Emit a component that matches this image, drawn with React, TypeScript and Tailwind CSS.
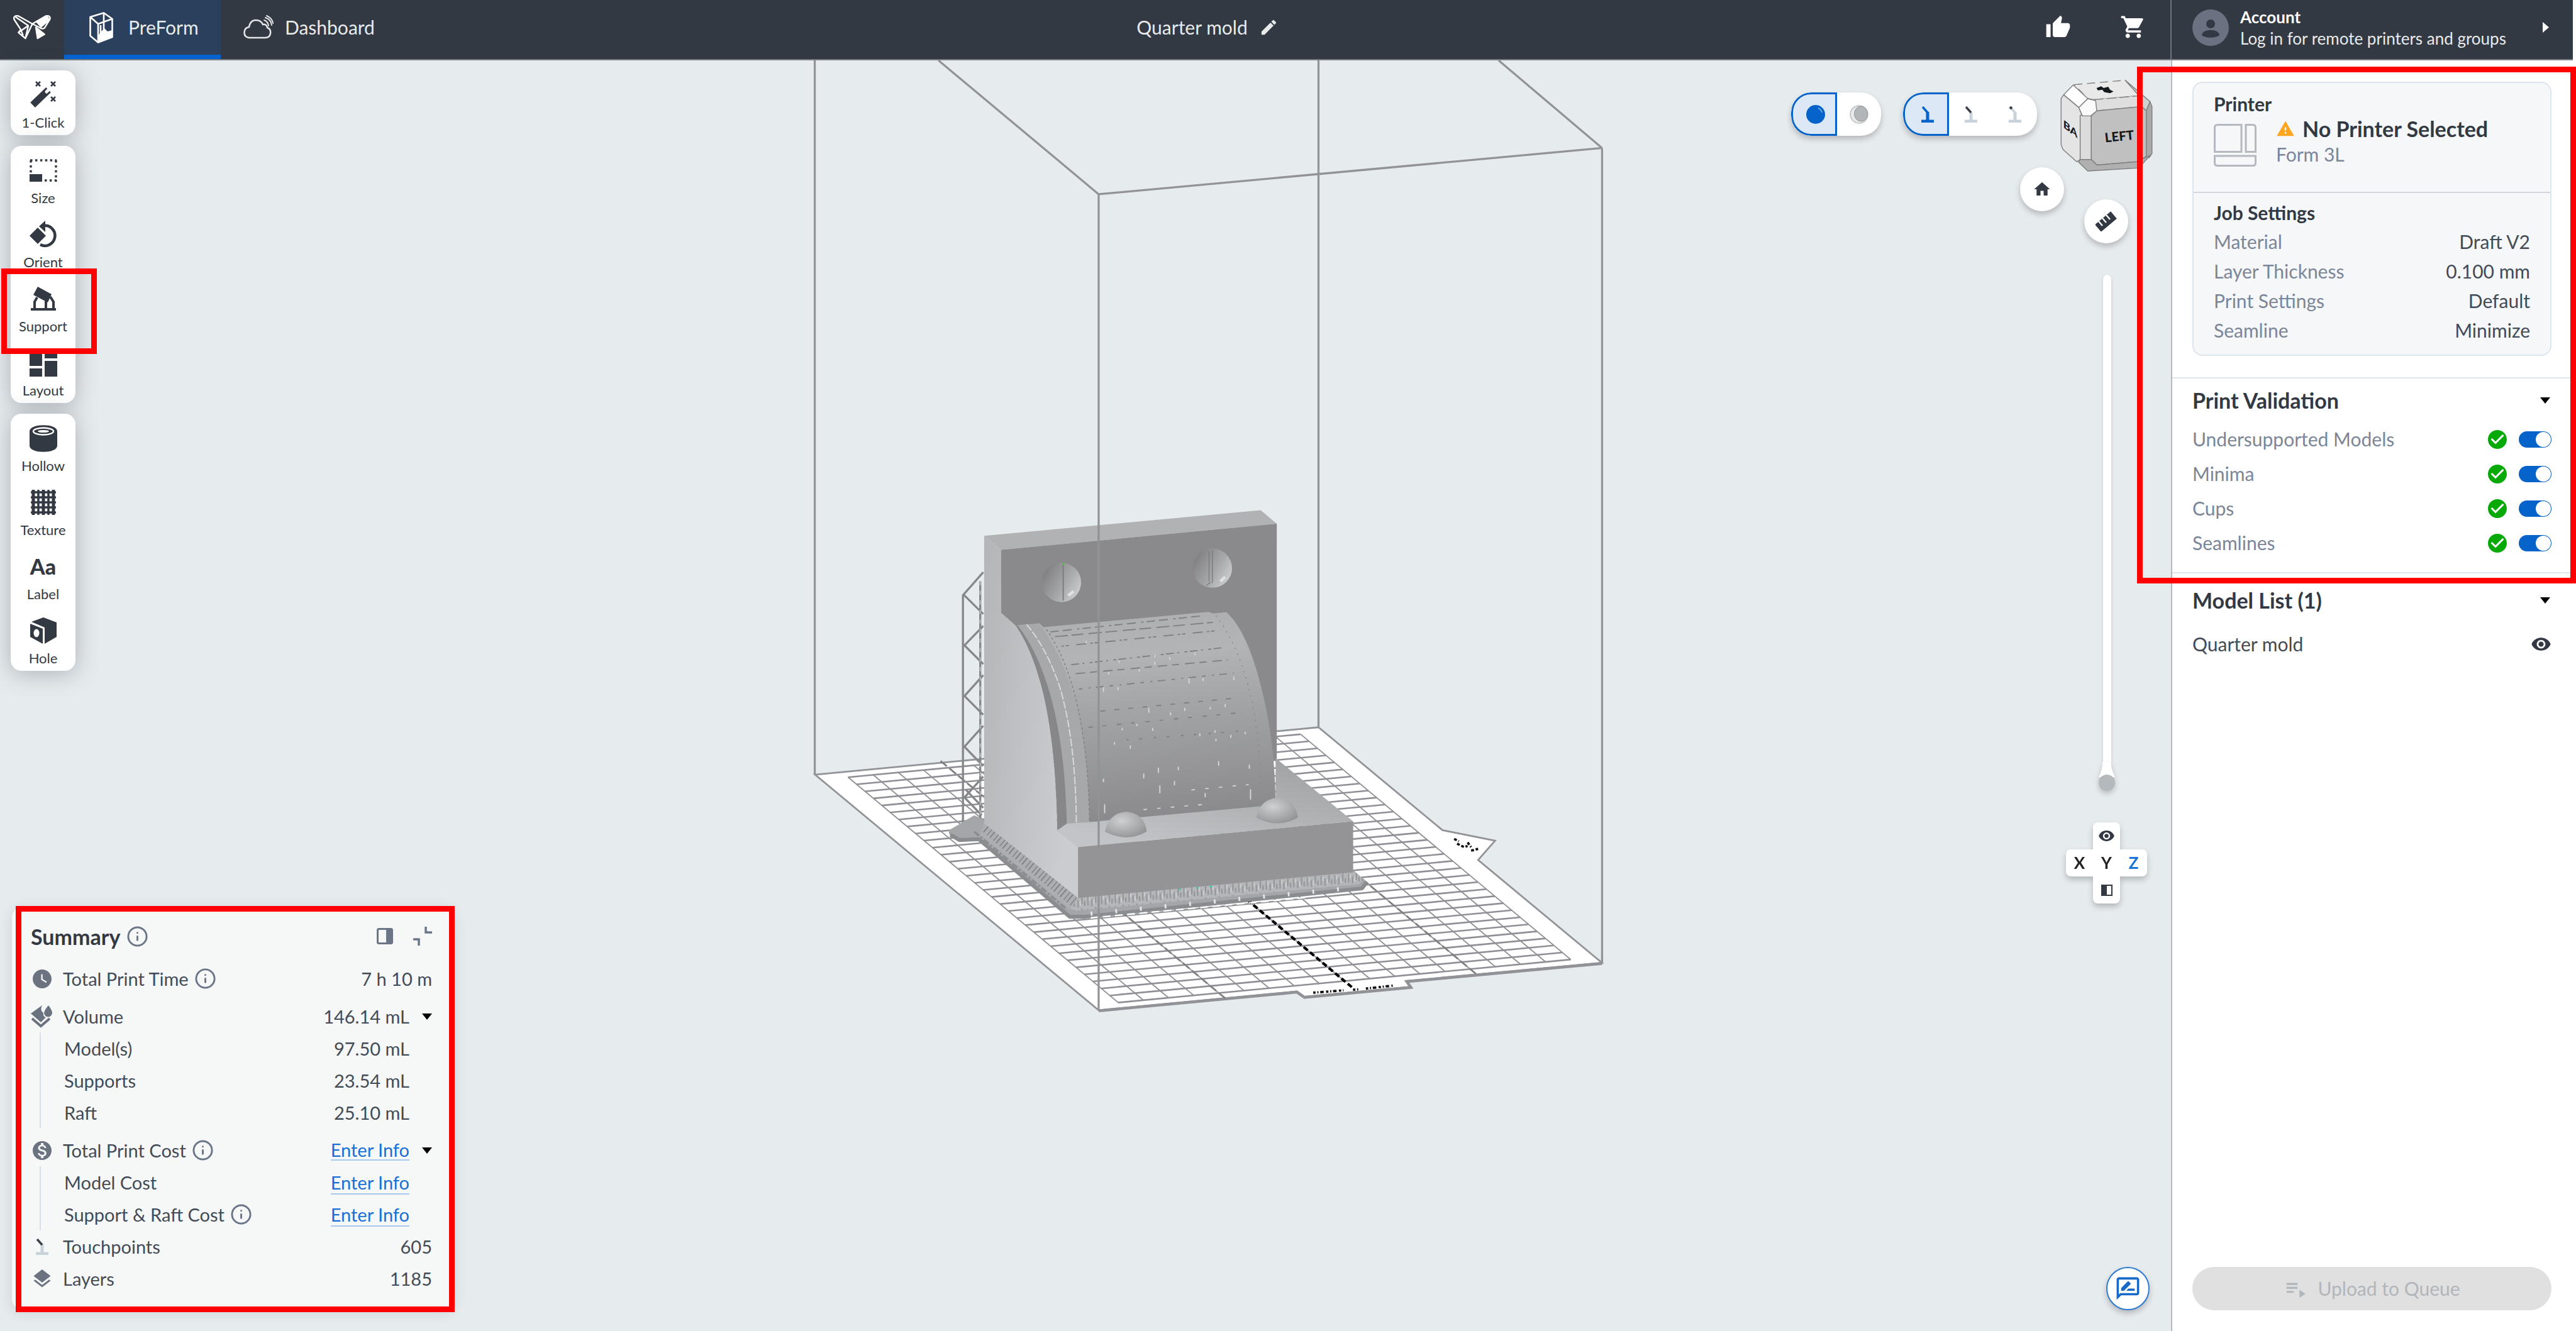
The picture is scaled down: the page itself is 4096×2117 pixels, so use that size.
import { ReactElement, ReactNode } from 'react'
import { Info } from 'lucide-react'
import {
  MdCheckCircle,
  MdEdit,
  MdHome,
  MdLayers,
  MdMonetizationOn,
  MdOutlineRateReview,
  MdPlaylistPlay,
  MdShoppingCart,
  MdThumbUp,
  MdVisibility,
  MdWarning,
  MdWatchLater,
} from 'react-icons/md'

const settings = [
  ['Material', 'Draft V2'],
  ['Layer Thickness', '0.100 mm'],
  ['Print Settings', 'Default'],
  ['Seamline', 'Minimize'],
]

const validations = ['Undersupported Models', 'Minima', 'Cups', 'Seamlines']

function Caret({ className = '' }: { className?: string }): ReactElement {
  return (
    <svg viewBox="0 0 16 10" className={`h-[10px] w-4 ${className}`} fill="#000">
      <path d="M0 0h16l-8 10z" />
    </svg>
  )
}

function Logo(): ReactElement {
  return (
    <svg viewBox="0 0 65 42" className="h-[39px] w-[60px]" fill="none" stroke="#fff" strokeWidth="2.6" strokeLinejoin="round">
      <path d="M33 15 10 2Q6 0 3 2Q0 4 2 8L13 25 9 30 21 40z" />
      <path d="M4 3 26 18M9 30 26 18 21 40M13 25l4 10" />
      <path d="M33 15 55 2Q59 0 62 2Q65 5 62 9L54 22Q50 25 45 21z" />
      <path d="M40 11 58 2 62 8 48 20z" fill="#fff" />
      <path d="M39 21 54 33 42 40z" fill="#fff" />
    </svg>
  )
}

function PreFormIcon(): ReactElement {
  return (
    <svg viewBox="0 0 38 50" className="h-[50px] w-[38px]" fill="none" stroke="#fff" strokeWidth="2.6" strokeLinejoin="round">
      <path d="M1.500 8 23 1.500 36.500 11v29L14 48.500 1.500 38z" />
      <path d="M1.500 8 14 19 36.500 11M14 19v29M23 2v27M18 21v20" />
      <path d="M18 32 24 26 29 31 36 29V40L14 48V38z" fill="#fff" stroke="none" />
    </svg>
  )
}

function CloudIcon(): ReactElement {
  return (
    <svg viewBox="0 0 48 38" className="h-[38px] w-12" fill="none" stroke="#e4e6e8" strokeWidth="2.500" strokeLinecap="round">
      <path d="M9 36Q1 35 1.500 27 2 20 9 19 11 8 20 8 28 8 31 15 37 14 38 20 44 22 43 29 42 36 35 36z" />
      <path d="M33 8q6 2 7 9M35 4q9 3 10 12M37 1q9 4 10 12" strokeWidth="2" />
    </svg>
  )
}

function Header(): ReactElement {
  return (
    <header className="flex h-[96px] shrink-0 mr-[5px] bg-[#323943] border-b-2 border-[#7b8087] text-[30px] text-[#e8eaec]">
      <a href="#home" aria-label="Home" className="flex w-[102px] items-center justify-center pb-2">
        <Logo />
      </a>
      <button className="flex w-[249px] items-center gap-6 border-b-[7px] border-[#0563d0] bg-[#2b405c] pl-10">
        <PreFormIcon />
        PreForm
      </button>
      <button className="flex w-[254px] items-center gap-[18px] pl-9 pb-2">
        <CloudIcon />
        Dashboard
      </button>
      <div className="flex flex-1 items-center justify-center gap-[18px] pb-2">
        Quarter mold
        <button aria-label="Rename">
          <MdEdit size={31} />
        </button>
      </div>
      <div className="flex w-[216px] items-center gap-[78px] pl-[17px] pb-2 text-white">
        <button aria-label="Feedback">
          <MdThumbUp size={41} />
        </button>
        <button aria-label="Store">
          <MdShoppingCart size={42} />
        </button>
      </div>
      <button className="flex w-[640px] items-center gap-[18px] border-l-2 border-[#6d737b] pl-[33px] pr-[38px] pb-[7px] text-left">
        <svg viewBox="0 0 58 58" className="h-[58px] w-[58px]">
          <circle cx="29" cy="29" r="29" fill="#6a7281" />
          <circle cx="29" cy="23" r="7" fill="#323943" />
          <path d="M15 41c0-11 28-11 28 0-6 5-22 5-28 0z" fill="#323943" />
        </svg>
        <span className="flex-1 text-[26px] leading-[34px]">
          <b className="block text-white">Account</b>
          Log in for remote printers and groups
        </span>
        <svg viewBox="0 0 10 17" className="h-[17px] w-[10px]" fill="#fff">
          <path d="M0 0v17l10-8.500z" />
        </svg>
      </button>
    </header>
  )
}

const ink = '#323943'

function WandIcon(): ReactElement {
  return (
    <svg viewBox="0 0 44 44" className="h-11 w-11" fill="none" stroke={ink}>
      <path d="M5 38 30 14" strokeWidth="11" />
      <path d="M27 17l4-4" stroke="#fff" strokeWidth="5" strokeLinecap="round" />
      <path d="M10 1l7 7m0-7-7 7M34 1l7 7m0-7-7 7M34 25l7 7m0-7-7 7" strokeWidth="2.6" />
    </svg>
  )
}

function SizeIcon(): ReactElement {
  return (
    <svg viewBox="0 0 44 36" className="h-9 w-11" fill="none" stroke={ink} strokeWidth="3.400">
      <path d="M1 2h42M24 34h19" strokeDasharray="3.500 4.400" />
      <path d="M2 2v23M42 2v34" strokeDasharray="3.500 4.400" />
      <path d="M0 24h20v12H0z" fill={ink} stroke="none" />
    </svg>
  )
}

function OrientIcon(): ReactElement {
  return (
    <svg viewBox="0 0 44 44" className="h-11 w-11" fill={ink}>
      <path d="M0 24 13 11 26 24 13 37z" />
      <path d="M22 8a16 16 0 1 1-5 30" fill="none" stroke={ink} strokeWidth="4.500" />
      <path d="M15 9 25 0v18z" />
    </svg>
  )
}

function SupportIcon(): ReactElement {
  return (
    <svg viewBox="0 0 40 38" className="h-[38px] w-10" fill="none" stroke={ink} strokeWidth="4">
      <path d="M11 0 33 12 27 25 4 13z" fill={ink} stroke="none" />
      <path d="M0 36h40M6 36V24l4-7M24 36V20M36 36V24l-5-8" />
    </svg>
  )
}

function LayoutIcon(): ReactElement {
  return (
    <svg viewBox="0 0 44 44" className="h-11 w-11" fill={ink}>
      <path d="M0 0h20v27H0zM0 31h20v13H0zM24 0h20v15H24zM24 19h20v25H24z" />
    </svg>
  )
}

function HollowIcon(): ReactElement {
  return (
    <svg viewBox="0 0 44 44" className="h-11 w-11" fill={ink}>
      <path d="M0 11C0-2 44-2 44 11V34C44 47 0 47 0 34z" />
      <ellipse cx="22" cy="11" rx="16" ry="5.500" fill="none" stroke="#fff" strokeWidth="2.400" />
      <ellipse cx="22" cy="11" rx="9" ry="2" fill="#fff" />
    </svg>
  )
}

function TextureIcon(): ReactElement {
  const steps = [4, 12, 20, 28, 36]
  return (
    <svg viewBox="0 0 40 40" className="h-10 w-10" fill="none" stroke={ink} strokeWidth="3.600" strokeLinecap="round">
      {steps.map((p, i) => (
        <g key={p}>
          <path d={`M1.500 ${p}h37`} strokeDasharray={i % 2 ? '6 1' : '8 1'} />
          <path d={`M${p} 1.500v37`} strokeWidth={i % 2 ? 3.6 : 5} />
        </g>
      ))}
    </svg>
  )
}

function HoleIcon(): ReactElement {
  return (
    <svg viewBox="0 0 42 42" className="h-[42px] w-[42px]" fill={ink}>
      <path d="M2 7 21 0 42 8V31L23 42V16z" />
      <path d="M0 10 20 18V42L0 31z" />
      <ellipse cx="10" cy="25" rx="4.500" ry="6.500" fill="#fff" />
    </svg>
  )
}

function Tool({ icon, label }: { icon: ReactNode; label: string }): ReactElement {
  return (
    <button className="flex h-[102px] w-full flex-col items-center pt-[17px] text-[#323943]">
      <span className="flex h-11 items-center justify-center">{icon}</span>
      <span className="mt-2 text-[22px] leading-[28px]">{label}</span>
    </button>
  )
}

function ToolCard({ children }: { children: ReactNode }): ReactElement {
  return (
    <div className="w-[103px] rounded-[17px] bg-white pb-px shadow-[0_4px_36px_rgba(60,70,80,0.35)]">{children}</div>
  )
}

function Toolbar(): ReactElement {
  return (
    <nav className="absolute left-[17px] top-4 flex flex-col gap-[17px]">
      <ToolCard>
        <Tool icon={<WandIcon />} label="1-Click" />
      </ToolCard>
      <ToolCard>
        <Tool icon={<SizeIcon />} label="Size" />
        <Tool icon={<OrientIcon />} label="Orient" />
        <Tool icon={<SupportIcon />} label="Support" />
        <Tool icon={<LayoutIcon />} label="Layout" />
      </ToolCard>
      <ToolCard>
        <Tool icon={<HollowIcon />} label="Hollow" />
        <Tool icon={<TextureIcon />} label="Texture" />
        <Tool icon={<b className="text-[34px] font-black leading-[34px]">Aa</b>} label="Label" />
        <Tool icon={<HoleIcon />} label="Hole" />
      </ToolCard>
    </nav>
  )
}

// points along a line of the build plate, u across the front edge, v from back to front
function plate(u: number, v: number): string {
  const x = 1450.5 + 774 * u + 462 * v
  const y = 1328.5 - 73.6 * u + 385.4 * v
  return `${x.toFixed(1)} ${y.toFixed(1)}`
}

// engraved marks of the curved face: [y at left, y drop to right, dash pattern, start x, end x]
const marks: [number, number, string, number, number][] = [
  [470, -55, '28 14 30 18 8 10', 385, 905],
  [486, -48, '44 12 40 18', 400, 930],
  [518, -52, '8 6 12 24 34 14', 422, 940],
  [580, -58, '26 12 6 18 10 8', 455, 970],
  [610, -46, '32 16 24 20', 470, 980],
  [662, -54, '12 22 6 18 26 20', 480, 1000],
  [736, -44, '18 30 16 30', 552, 1005],
  [790, -48, '16 32 12 36', 512, 1010],
  [832, -30, '8 34 10 40', 640, 1030],
]

const ticks = [
  [615, 566, 8], [505, 500, 8], [735, 545, 10], [785, 555, 10], [870, 540, 8], [580, 605, 8], [683, 595, 8],
  [735, 570, 10], [612, 655, 10], [563, 655, 16], [850, 625, 18], [897, 625, 10], [1000, 620, 12], [715, 725, 16],
  [788, 740, 10], [836, 725, 10], [921, 722, 8], [971, 712, 10], [675, 778, 8], [728, 792, 10], [626, 792, 8],
  [886, 810, 10], [937, 800, 8], [990, 815, 10], [600, 840, 8], [653, 850, 12], [940, 828, 8], [1038, 805, 8],
  [747, 925, 18], [698, 945, 16], [814, 922, 12], [949, 903, 16], [1052, 915, 14], [563, 962, 12], [801, 970, 14],
  [752, 985, 26], [904, 1010, 14], [1056, 998, 34], [567, 1048, 30],
]

function Viewport(): ReactElement {
  const cols = Array.from({ length: 19 }, (_, i) => i)
  const rows = Array.from({ length: 33 }, (_, i) => i)
  return (
    <svg viewBox="0 102 3713 2175" className="h-full w-full" preserveAspectRatio="xMidYMin slice" fill="none">
      <defs>
        <linearGradient id="side" x1="0" x2="1" y1="0" y2="0.300">
          <stop offset="0" stopColor="#b4b5b7" />
          <stop offset="1" stopColor="#cbccd0" />
        </linearGradient>
        <linearGradient id="barrel" x1="0.400" x2="0.500" y1="0" y2="1">
          <stop offset="0" stopColor="#aeafb1" />
          <stop offset="0.200" stopColor="#b3b4b6" />
          <stop offset="0.450" stopColor="#a4a5a7" />
          <stop offset="1" stopColor="#89898b" />
        </linearGradient>
        <linearGradient id="ledge" x1="1" x2="0.300" y1="0" y2="1">
          <stop offset="0" stopColor="#9d9ea0" />
          <stop offset="1" stopColor="#c3c4c7" />
        </linearGradient>
        <linearGradient id="dent" x1="0" x2="1" y1="0.200" y2="0.800">
          <stop offset="0" stopColor="#7c7c7e" />
          <stop offset="0.600" stopColor="#a9aaac" />
          <stop offset="1" stopColor="#d0d1d3" />
        </linearGradient>
        <radialGradient id="dome" cx="0.400" cy="0.350" r="0.700">
          <stop offset="0" stopColor="#cfd0d2" />
          <stop offset="1" stopColor="#939496" />
        </radialGradient>
        <pattern id="pins" width="46" height="40" patternUnits="userSpaceOnUse" patternTransform="skewY(-5)">
          <path d="M5 2v30M18 12v24M31 0v26M40 16v16" stroke="#8f9092" strokeWidth="4" />
          <path d="M10 4v14M25 14v16" stroke="#cfd0d3" strokeWidth="4" />
        </pattern>
      </defs>

      {/* build plate */}
      <path
        d="M1394 1324 2255 1243 2467 1419 2557 1437 2528 1470 2740 1646 2406 1677 2413 1687 2231 1704 2218 1695 1879 1727z"
        fill="#fff"
        stroke="#929398"
        strokeWidth="3"
      />
      <path d="M1879 1728 2218 1696 2231 1705 2413 1688 2406 1678 2740 1647" stroke="#919297" strokeWidth="5" />
      <g stroke="#8f9095" strokeWidth="2">
        {cols.map((i) => (
          <path key={i} d={`M${plate(i / 18, 0)}L${plate(i / 18, 1)}`} />
        ))}
      </g>
      <g stroke="#8f9095" strokeWidth="2.800">
        {rows.map((i) => (
          <path key={i} d={`M${plate(0, i / 32)}L${plate(1, i / 32)}`} />
        ))}
      </g>
      <path
        d={`M${plate(4 / 18, -0.03)}L${plate(4 / 18, 1.03)}M${plate(14 / 18, 0)}L${plate(14 / 18, 1.03)}`}
        stroke="#7f7f80"
        strokeWidth="3"
        strokeDasharray="14 6"
      />
      <path d={`M${plate(0.5, 0.5)}L${plate(0.5, 1.03)}`} stroke="#000" strokeWidth="4.500" strokeDasharray="9 5" />
      <path d="M2246 1697 2298 1693M2314 1692 2326 1691M2336 1690 2382 1685" stroke="#111" strokeWidth="4" strokeDasharray="4 3 2 3 6 4" />
      <path d="M2487 1434l8 4M2492 1442l12 6 6-2M2510 1440l6 8M2516 1454l12-3" stroke="#111" strokeWidth="4" strokeDasharray="5 3" />

      {/* build volume behind the part */}
      <path d="M1393.500 102V1324M2255 102V1243M2740 252V1646M1879 331 2740 252M1879 331 1605 102M2740 252 2563 102" stroke="#919397" strokeWidth="3.500" />

      {/* the part itself */}
      <g transform="translate(1600 840) scale(0.5102)">
        <g stroke="#86878a" strokeWidth="7">
          <path d="M92 345V1135M150 300V1110" />
          <path d="M160 270 94 345 160 410M160 450 97 515 160 578M160 615 97 685 160 748M160 785 97 855 160 920M160 955 97 1025 155 1085" />
          <path d="M102 1000 160 1060" />
        </g>
        <path d="M150 300V1110" stroke="#b9babc" strokeWidth="4" strokeDasharray="14 18" />
        <path d="M163 1100 130 1085 45 1135Q40 1155 75 1168L145 1165 450 1425 500 1425 1430 1330 1446 1308 1400 1270z" fill="#a5a6a9" />
        <path d="M50 1150 80 1168 145 1165 450 1425 500 1425 1430 1330 1446 1308" stroke="#8b8c8f" strokeWidth="13" strokeLinejoin="round" />
        <path d="M478 1355 1400 1272 1436 1300 1420 1316 470 1405 440 1395z" fill="#b5b6b9" />
        <path d="M478 1355 1400 1272 1436 1300 1420 1316 470 1405 440 1395z" fill="url(#pins)" />
        <path d="M163 1110 478 1365 450 1400 150 1150z" fill="#adaeb1" />
        <path d="M170 1128 470 1380" stroke="#808184" strokeWidth="34" strokeDasharray="4 12 3 9" />
        <path d="M130 1140 440 1400" stroke="#8c8d90" strokeWidth="8" strokeDasharray="20 8 6 8" />
        <path d="M520 1415 1400 1328" stroke="#e4e6e8" strokeWidth="14" strokeDasharray="6 77" />
        <path d="M520 1429 1250 1360" stroke="#fff" strokeWidth="5" strokeDasharray="26 15" />

        <path d="M163 148 1090 62 1144 107 219 195z" fill="#b1b2b4" />
        <path d="M219 195 1144 107V900H500L219 405z" fill="#8a8a8c" />
        <path d="M163 148 219 195V405L270 450Q400 640 408 1135L478 1192V1362L163 1112z" fill="url(#side)" />
        <path d="M1140 893 1400 1105 478 1192 408 1135 440 1112 516 1108 1140 1045z" fill="url(#ledge)" />
        <path d="M478 1192 1400 1105V1276L478 1362z" fill="#949496" />

        <path d="M270 450 290 446Q430 650 442 1112L408 1135Q400 640 270 450z" fill="#878789" />
        <path d="M275 447 350 441Q510 640 518 1108L440 1113Q430 650 275 447z" fill="#a7a8aa" />
        <path d="M345 441 362 454 915 403 930 408 975 404Q1050 470 1100 690 1138 850 1140 1050L700 1090 516 1108Q510 650 345 441z" fill="url(#barrel)" />
        <path d="M305 445Q370 520 415 650 470 830 472 1112" stroke="#d9dadd" strokeWidth="4" strokeDasharray="26 6" />
        <path d="M372 462Q510 660 516 1108" stroke="#808183" strokeWidth="3" strokeDasharray="8 8" />
        <path d="M940 415Q1080 600 1090 980" stroke="#88898b" strokeWidth="3" strokeDasharray="5 16" />
        {marks.map(([y, drop, dash, from, to]) => (
          <path key={y} d={`M${from} ${y}L${to} ${y + drop}`} stroke="#7f8082" strokeWidth="4" strokeDasharray={dash} />
        ))}
        {ticks.map(([x, y, h]) => (
          <path key={`${x}-${y}`} d={`M${x} ${y}v${h}`} stroke="#d5d6d9" strokeWidth="4" />
        ))}
        <path d="M697 1066 905 1048M858 1000 1050 982" stroke="#cfd0d2" strokeWidth="4" strokeDasharray="12 34" />

        <circle cx="422" cy="304" r="66" fill="url(#dent)" />
        <circle cx="928" cy="256" r="66" fill="url(#dent)" />
        <path d="M428 242V365" stroke="#7b7c7e" strokeWidth="4" />
        <path d="M426 242h6" stroke="#3fd12f" strokeWidth="5" />
        <path d="M917 200V300M928 196V306M908 315l14-12" stroke="#7b7c7e" strokeWidth="3" />
        <path d="M445 348l18-14M955 300l16-14" stroke="#e0e1e3" strokeWidth="10" />
        <path d="M568 1140Q580 1078 640 1073 700 1078 708 1140 640 1178 568 1140z" fill="url(#dome)" />
        <path d="M1075 1093Q1087 1031 1147 1026 1207 1031 1215 1093 1147 1131 1075 1093z" fill="url(#dome)" />
        <path d="M816 1333h6M875 1328h6M920 1324h6" stroke="#2fc7a0" strokeWidth="5" />
      </g>

      <path d="M1879 331V1727" stroke="#919397" strokeWidth="3.500" />
    </svg>
  )
}

function ViewCube(): ReactElement {
  return (
    <svg viewBox="0 0 158 158" className="absolute right-[29px] top-[30px] h-[147px] w-[147px]" stroke="#7f7f7f" strokeWidth="1.500" strokeLinejoin="round">
      <path d="M23.600 9.300 111 1.700 134.500 28.300 57.600 35 47 33z" fill="#e9e9e9" strokeDasharray="14 8" />
      <path d="M22 10 47 33 31.600 48.300 5.700 26.700z" fill="#fff" />
      <path d="M57.600 35 134.500 28.300 139 46.700 62.300 54z" fill="#dedede" strokeDasharray="16 6" />
      <path d="M111 1.700 153.400 38.300 147 54 139 46.700 134.500 28.300z" fill="#cfcfcf" />
      <path d="M1.400 33 5.700 26.700 31.600 48.300 37 61.700 34 63V137L28 141 4.700 120 1.400 112z" fill="#e4e4e4" />
      <path d="M34 61.700H53V137.300H34z" fill="#dcdcdc" />
      <path d="M62.300 54 139 46.700 147 54V132L130.700 141 62.800 146.700 53 137.300V62.700z" fill="#c0c0c0" />
      <path d="M153.400 38.300 156.700 46.700V127L152 134 147 132V54z" fill="#a9a9a9" />
      <path d="M62.800 146.700 130.700 141 154 130 137 148.300 130.700 152 47 157 31 141.700 34 137.300H53z" fill="#b0b0b0" />
      <path d="M47 33.300 60.400 36.700 62.300 54 52 62.700H37.800L31.600 48.300z" fill="#fafafa" />
      <path d="M62 15l8-3 4 3 8-2 3 5 6 3-6 3-10-2-3-4-8 1z" fill="#15181d" stroke="none" />
      <text x="77" y="108" transform="rotate(-6 77 108)" fontSize="22" fontWeight="900" fill="#15181d" stroke="none">
        LEFT
      </text>
      <text x="5" y="82" transform="translate(5 82) skewY(38) translate(-5 -82)" fontSize="18" fontWeight="900" fill="#15181d" stroke="none">
        BA
      </text>
    </svg>
  )
}

function Arm({ tip, base }: { tip: string; base: string }): ReactElement {
  return (
    <svg viewBox="0 0 20 26" className="h-[26px] w-5" fill="none" strokeWidth="4.500">
      <path d="M10 24V9M0 24h20" stroke={base} strokeWidth="5" />
      <path d="M10 10 2 1" stroke={tip} strokeWidth="3.500" />
    </svg>
  )
}

const segment = 'flex h-[69px] w-[70px] items-center justify-center'
const segmentActive =
  'flex h-[69px] w-[73px] items-center justify-center rounded-l-[32px] border-3 border-[#0563c9] bg-[#dde8f6] pl-1'

function ViewControls(): ReactElement {
  return (
    <>
      <div className="absolute right-[461px] top-[51px] flex overflow-hidden rounded-[32px] bg-white shadow-[0_5px_10px_rgba(0,0,0,0.22)]">
        <button className={segmentActive} aria-label="Solid view" aria-pressed>
          <svg viewBox="0 0 30 30" className="h-[30px] w-[30px]">
            <circle cx="15" cy="15" r="15" fill="#0563c9" />
            <path d="M19 5q5 2 6 7" fill="none" stroke="#8ab6e8" strokeWidth="1.500" />
          </svg>
        </button>
        <button className={segment} aria-label="Slice view">
          <svg viewBox="0 0 30 30" className="h-[30px] w-[30px]">
            <circle cx="15" cy="15" r="14" fill="#e6e8e9" stroke="#a2a6a9" strokeWidth="1.500" strokeDasharray="2 1" />
            <ellipse cx="18" cy="14" rx="10.500" ry="12" fill="#b2b6b8" stroke="#94999c" />
          </svg>
        </button>
      </div>
      <div className="absolute right-[213px] top-[51px] flex overflow-hidden rounded-[32px] bg-white shadow-[0_5px_10px_rgba(0,0,0,0.22)]">
        <button className={segmentActive} aria-label="All supports" aria-pressed>
          <Arm tip="#0563c9" base="#0563c9" />
        </button>
        <button className={segment} aria-label="Touchpoints and tips">
          <Arm tip="#3a3f46" base="#c8d2da" />
        </button>
        <button className={segment} aria-label="Touchpoints only">
          <svg viewBox="0 0 20 26" className="h-[26px] w-5" fill="none" stroke="#c8d2da">
            <path d="M10 24V9M0 24h20" strokeWidth="5" />
            <path d="M10 10 2 1" strokeWidth="3.500" />
            <path d="M5 4 2 1" stroke="#3a3f46" strokeWidth="4" />
          </svg>
        </button>
      </div>
      <ViewCube />
      <button aria-label="Home view" className="absolute right-[170px] top-[170px] flex h-[70px] w-[70px] items-center justify-center rounded-full bg-white text-[#323943] shadow-[0_5px_10px_rgba(0,0,0,0.22)]">
        <MdHome size={30} />
      </button>
      <button aria-label="Measure" className="absolute right-[68px] top-[221px] flex h-[70px] w-[70px] items-center justify-center rounded-full bg-white shadow-[0_5px_10px_rgba(0,0,0,0.22)]">
        <svg viewBox="0 0 34 32" className="h-8 w-[34px]" fill="none">
          <path d="M4 27 29 6" stroke="#323943" strokeWidth="15" />
          <path d="M5 16l6 7M11 11l6 7M17 6l6 7" stroke="#fff" strokeWidth="2.400" />
        </svg>
      </button>
      <label className="absolute right-[89px] top-[341px] flex h-[821px] w-[26px] flex-col items-center">
        <span className="w-[13px] flex-1 rounded-t-full bg-white shadow-[0_2px_5px_rgba(0,0,0,0.15)]" />
        <svg viewBox="0 0 26 46" className="h-[46px] w-[26px] drop-shadow-[0_4px_4px_rgba(0,0,0,0.2)]">
          <path d="M6 0h14v4q0 8 6 20H0q6-12 6-20z" fill="#fff" />
          <circle cx="13" cy="33" r="13" fill="#b3b9bd" />
        </svg>
        <input type="range" aria-label="Layer" className="absolute inset-0 h-full w-full opacity-0 [writing-mode:vertical-lr]" />
      </label>
      <div className="absolute right-[38px] top-[1212px] grid grid-cols-3 text-center text-[26px] font-bold text-[#222] drop-shadow-[0_5px_5px_rgba(0,0,0,0.22)]">
        <button aria-label="Show slice" className="col-start-2 flex h-[43px] w-[43px] items-center justify-center rounded-t-lg bg-white text-[#323943]">
          <MdVisibility size={27} />
        </button>
        <button className="col-start-1 h-[43px] w-[43px] rounded-l-lg bg-white">X</button>
        <button className="h-[43px] w-[43px] bg-white">Y</button>
        <button className="h-[43px] w-[43px] rounded-r-lg bg-white text-[#1a73d9]">Z</button>
        <button aria-label="Flip" className="col-start-2 flex h-[43px] w-[43px] items-center justify-center rounded-b-lg bg-white">
          <svg viewBox="0 0 18 18" className="h-[18px] w-[18px]">
            <path d="M1 1h16v16H1z" fill="#fff" stroke="#323943" strokeWidth="2" />
            <path d="M0 0h9v18H0z" fill="#323943" />
          </svg>
        </button>
      </div>
      <button aria-label="Send feedback" className="absolute bottom-[33px] right-[34px] flex h-[69px] w-[69px] items-center justify-center rounded-full border-2 border-[#2f7bd0] bg-white text-[#1668c9] shadow-[0_5px_10px_rgba(0,0,0,0.22)]">
        <MdOutlineRateReview size={43} />
      </button>
    </>
  )
}

function InfoIcon(): ReactElement {
  return <Info size={35} strokeWidth={2} className="text-[#6b7588]" />
}

function SummaryRow({ icon, label, info, value }: { icon?: ReactNode; label: string; info?: boolean; value: ReactNode }): ReactElement {
  return (
    <div className="flex h-[51px] items-center">
      <span className="flex w-[51px] items-center text-[#6b7280]">{icon}</span>
      <dt className="flex flex-1 items-center gap-[9px]">
        {label}
        {info && <InfoIcon />}
      </dt>
      <dd className="flex items-center">{value}</dd>
    </div>
  )
}

function SubRow({ label, info, value }: { label: string; info?: boolean; value: ReactNode }): ReactElement {
  return (
    <div className="flex h-[51px] items-center justify-between">
      <dt className="flex items-center gap-[9px]">
        {label}
        {info && <InfoIcon />}
      </dt>
      <dd>{value}</dd>
    </div>
  )
}

function EnterInfo(): ReactElement {
  return (
    <a href="#cost" className="border-b-2 border-[#a9c8ee] leading-[30px] text-[#1a6fd4]">
      Enter Info
    </a>
  )
}

function VolumeIcon(): ReactElement {
  return (
    <svg viewBox="0 0 34 38" className="h-[38px] w-[34px]" fill="#6b7280">
      <path d="M18 1Q14 9 20 13 19 19 24 20L16 28 0 14z" />
      <path d="M28 1q6 8 6 12a6.500 6.500 0 0 1-13 0q1-5 7-12z" />
      <path d="M2 22 16 34 30 22" fill="none" stroke="#6b7280" strokeWidth="4" />
    </svg>
  )
}

function Summary(): ReactElement {
  return (
    <section className="absolute bottom-[34px] left-[19px] w-[702px] rounded-[17px] bg-[#f6f8f8] pl-[30px] pr-[34px] pb-6 pt-[17px] text-[29px] text-[#434b56] shadow-[0_4px_20px_rgba(60,70,80,0.15)]">
      <div className="flex h-[60px] items-center">
        <h2 className="text-[34px] font-bold text-[#323943]">Summary</h2>
        <span className="ml-[10px] flex-1">
          <InfoIcon />
        </span>
        <button aria-label="Dock panel">
          <svg viewBox="0 0 26 26" className="h-[26px] w-[26px]">
            <rect x="1.500" y="1.500" width="23" height="23" rx="2" fill="none" stroke="#6b7588" strokeWidth="3" />
            <path d="M15 2h9v22h-9z" fill="#6b7588" />
          </svg>
        </button>
        <button aria-label="Collapse" className="ml-8">
          <svg viewBox="0 0 30 30" className="h-[30px] w-[30px]" fill="none" stroke="#6b7588" strokeWidth="3.500">
            <path d="M20 0v9h10M0 20h9v10" />
          </svg>
        </button>
      </div>
      <dl className="mt-[12px]">
        <SummaryRow icon={<MdWatchLater size={36} />} label="Total Print Time" info value="7 h 10 m" />
        <div className="mt-[9px]">
          <SummaryRow
            icon={<VolumeIcon />}
            label="Volume"
            value={
              <>
                146.14 mL
                <Caret className="ml-[20px]" />
              </>
            }
          />
        </div>
        <div className="ml-[14px] border-l-2 border-[#d8e0ec] pl-[37px] pr-9">
          <SubRow label="Model(s)" value="97.50 mL" />
          <SubRow label="Supports" value="23.54 mL" />
          <SubRow label="Raft" value="25.10 mL" />
        </div>
        <div className="mt-[9px]">
          <SummaryRow
            icon={<MdMonetizationOn size={36} />}
            label="Total Print Cost"
            info
            value={
              <>
                <EnterInfo />
                <Caret className="ml-[20px]" />
              </>
            }
          />
        </div>
        <div className="ml-[14px] border-l-2 border-[#d8e0ec] pl-[37px] pr-9">
          <SubRow label="Model Cost" value={<EnterInfo />} />
          <SubRow label="Support & Raft Cost" info value={<EnterInfo />} />
        </div>
        <SummaryRow
          icon={
            <span className="ml-2">
              <Arm tip="#3a3f46" base="#c8d2da" />
            </span>
          }
          label="Touchpoints"
          value="605"
        />
        <SummaryRow icon={<MdLayers size={36} />} label="Layers" value="1185" />
      </dl>
    </section>
  )
}

function PanelTitle({ children }: { children: ReactNode }): ReactElement {
  return (
    <h2 className="text-[34px] font-bold text-[#323943]">
      <button className="flex h-[69px] w-full items-center justify-between pr-0.5">
        {children}
        <Caret />
      </button>
    </h2>
  )
}

function Sidebar(): ReactElement {
  return (
    <aside className="flex w-[644px] shrink-0 flex-col border-l-2 border-[#b5b9bf] bg-white text-[30px] text-[#434b56]">
      <div className="ml-8 mr-[39px] mt-[34px] rounded-2xl border-2 border-[#dde5ed] bg-[#f5f7f9]">
        <div className="px-8 pb-10 pt-[13px]">
          <h3 className="h-10 font-bold leading-10 text-[#323943]">Printer</h3>
          <div className="flex h-20 items-end gap-[31px]">
            <svg viewBox="0 0 68 68" className="h-[68px] w-[68px]" fill="none" stroke="#b3b9bf" strokeWidth="3">
              <path d="M6 1.500H44V44.500H1.500V6Q1.500 1.500 6 1.500zM51 1.500H62Q66.500 1.500 66.500 6V44.500H51zM1.500 51H66.500V62Q66.500 66.500 62 66.500H6Q1.500 66.500 1.500 62z" />
            </svg>
            <div className="leading-10">
              <p className="flex items-center gap-3 text-[34px] font-bold text-[#323943]">
                <MdWarning size={30} className="text-[#ffa51f]" />
                No Printer Selected
              </p>
              <p className="text-[#7b8698]">Form 3L</p>
            </div>
          </div>
        </div>
        <div className="border-t-2 border-[#d0d6db] px-8 pb-[15px] pt-2">
          <h3 className="h-[46px] font-bold leading-[46px] text-[#323943]">Job Settings</h3>
          <table className="w-full">
            <tbody>
              {settings.map(([name, value]) => (
                <tr key={name} className="h-[47px]">
                  <th scope="row" className="p-0 text-left font-normal text-[#7b8698]">
                    {name}
                  </th>
                  <td className="p-0 text-right">{value}</td>
                </tr>
              ))}
            </tbody>
          </table>
        </div>
      </div>

      <section className="mt-[34px] border-t-2 border-[#dde5ed] pb-[19px] pl-8 pr-[39px]">
        <PanelTitle>Print Validation</PanelTitle>
        {validations.map((name) => (
          <label key={name} className="flex h-[55px] items-center text-[#7b8698]">
            <span className="flex-1">{name}</span>
            <MdCheckCircle size={36} className="mr-4 text-[#06a906]" />
            <input
              type="checkbox"
              defaultChecked
              className="relative h-[26px] w-[52px] appearance-none rounded-full bg-[#b3b9bf] before:absolute before:right-[1px] before:top-[1px] before:h-6 before:w-6 before:rounded-full before:bg-white checked:bg-[#0563c9]"
            />
          </label>
        ))}
      </section>

      <section className="border-t-2 border-[#dde5ed] pl-8 pr-[39px] pt-2">
        <PanelTitle>Model List (1)</PanelTitle>
        <div className="mt-2 flex h-[55px] items-center justify-between">
          Quarter mold
          <button aria-label="Toggle visibility" className="text-[#323943]">
            <MdVisibility size={33} />
          </button>
        </div>
      </section>

      <button disabled className="mb-[33px] ml-8 mr-[39px] mt-auto flex h-[69px] items-center justify-center gap-4 rounded-full bg-[#e0e0e0] text-[30px] text-[#b0b6bb]">
        <MdPlaylistPlay size={38} />
        Upload to Queue
      </button>
    </aside>
  )
}

export default function App(): ReactElement {
  return (
    <div className="relative flex h-screen flex-col overflow-hidden bg-white font-['Lato',sans-serif]">
      <Header />
      <div className="flex min-h-0 flex-1">
        <main className="relative min-w-0 flex-1 bg-[#e6ebee]">
          <Viewport />
          <Toolbar />
          <ViewControls />
          <Summary />
        </main>
        <Sidebar />
      </div>

      {/* callouts */}
      <div className="pointer-events-none absolute left-[2px] top-[427px] h-[136px] w-[152px] border-[9px] border-[#f00]" />
      <div className="pointer-events-none absolute bottom-[30px] left-[25px] h-[646px] w-[698px] border-[9px] border-[#f00]" />
      <div className="pointer-events-none absolute right-0 top-[106px] h-[822px] w-[698px] border-[9px] border-[#f00]" />
    </div>
  )
}
